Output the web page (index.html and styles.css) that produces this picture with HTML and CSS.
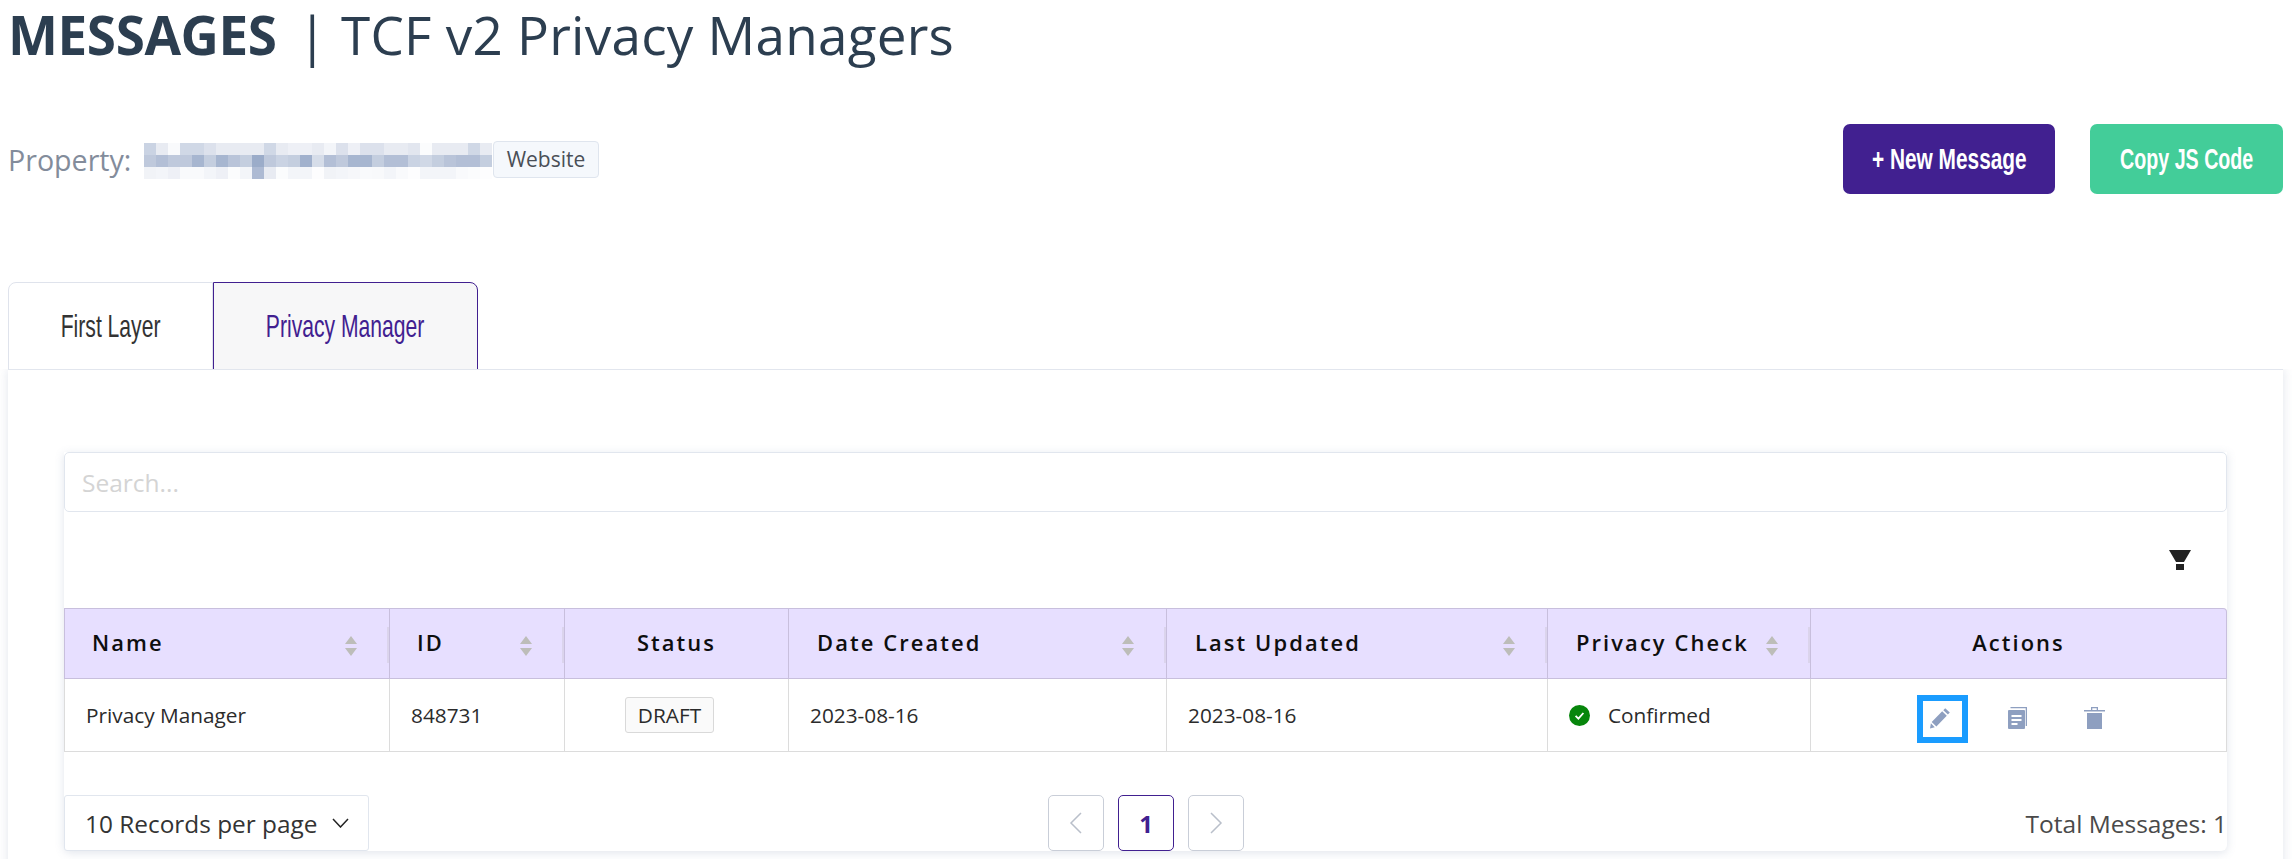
FILE: index.html
```html
<!DOCTYPE html>
<html lang="en">
<head>
<meta charset="utf-8">
<title>TCF v2 Privacy Managers</title>
<link rel="stylesheet" href="styles.css">
</head>
<body>
<header class="page-head">
  <h1 class="title"><strong>MESSAGES</strong><span class="title-sep">|</span>TCF v2 Privacy Managers</h1>
  <div class="toolbar">
    <div class="property">
      <span class="property-label">Property:</span>
      <svg class="mosaic" width="349" height="36" viewBox="0 0 29 3" shape-rendering="crispEdges" fill="#8a9dc0" aria-hidden="true">
        <g>
          <rect x="0" y="0" width="1" height="1" opacity=".45"/><rect x="1" y="0" width="1" height="1" opacity=".2"/><rect x="2" y="0" width="1" height="1" opacity=".05"/><rect x="3" y="0" width="1" height="1" opacity=".4"/><rect x="4" y="0" width="1" height="1" opacity=".4"/><rect x="5" y="0" width="1" height="1" opacity=".3"/><rect x="6" y="0" width="1" height="1" opacity=".2"/><rect x="7" y="0" width="1" height="1" opacity=".2"/><rect x="8" y="0" width="1" height="1" opacity=".2"/><rect x="9" y="0" width="1" height="1" opacity=".2"/><rect x="10" y="0" width="1" height="1" opacity=".4"/><rect x="11" y="0" width="1" height="1" opacity=".2"/><rect x="12" y="0" width="1" height="1" opacity=".15"/><rect x="13" y="0" width="1" height="1" opacity=".15"/><rect x="14" y="0" width="1" height="1" opacity=".2"/><rect x="15" y="0" width="1" height="1" opacity=".1"/><rect x="16" y="0" width="1" height="1" opacity=".3"/><rect x="17" y="0" width="1" height="1" opacity=".15"/><rect x="18" y="0" width="1" height="1" opacity=".3"/><rect x="19" y="0" width="1" height="1" opacity=".3"/><rect x="20" y="0" width="1" height="1" opacity=".2"/><rect x="21" y="0" width="1" height="1" opacity=".2"/><rect x="22" y="0" width="1" height="1" opacity=".25"/><rect x="23" y="0" width="1" height="1" opacity=".03"/><rect x="24" y="0" width="1" height="1" opacity=".2"/><rect x="25" y="0" width="1" height="1" opacity=".2"/><rect x="26" y="0" width="1" height="1" opacity=".2"/><rect x="27" y="0" width="1" height="1" opacity=".4"/><rect x="28" y="0" width="1" height="1" opacity=".2"/>
        </g>
        <g>
          <rect x="0" y="1" width="1" height="1" opacity=".55"/><rect x="1" y="1" width="1" height="1" opacity=".65"/><rect x="2" y="1" width="1" height="1" opacity=".55"/><rect x="3" y="1" width="1" height="1" opacity=".55"/><rect x="4" y="1" width="1" height="1" opacity=".75"/><rect x="5" y="1" width="1" height="1" opacity=".5"/><rect x="6" y="1" width="1" height="1" opacity=".75"/><rect x="7" y="1" width="1" height="1" opacity=".6"/><rect x="8" y="1" width="1" height="1" opacity=".5"/><rect x="9" y="1" width="1" height="1" opacity=".85"/><rect x="10" y="1" width="1" height="1" opacity=".55"/><rect x="11" y="1" width="1" height="1" opacity=".45"/><rect x="12" y="1" width="1" height="1" opacity=".5"/><rect x="13" y="1" width="1" height="1" opacity=".8"/><rect x="14" y="1" width="1" height="1" opacity=".35"/><rect x="15" y="1" width="1" height="1" opacity=".65"/><rect x="16" y="1" width="1" height="1" opacity=".55"/><rect x="17" y="1" width="1" height="1" opacity=".75"/><rect x="18" y="1" width="1" height="1" opacity=".75"/><rect x="19" y="1" width="1" height="1" opacity=".5"/><rect x="20" y="1" width="1" height="1" opacity=".65"/><rect x="21" y="1" width="1" height="1" opacity=".65"/><rect x="22" y="1" width="1" height="1" opacity=".45"/><rect x="23" y="1" width="1" height="1" opacity=".4"/><rect x="24" y="1" width="1" height="1" opacity=".5"/><rect x="25" y="1" width="1" height="1" opacity=".6"/><rect x="26" y="1" width="1" height="1" opacity=".65"/><rect x="27" y="1" width="1" height="1" opacity=".65"/><rect x="28" y="1" width="1" height="1" opacity=".5"/>
        </g>
        <g>
          <rect x="0" y="2" width="1" height="1" opacity=".12"/><rect x="1" y="2" width="1" height="1" opacity=".1"/><rect x="2" y="2" width="1" height="1" opacity=".15"/><rect x="3" y="2" width="1" height="1" opacity=".05"/><rect x="4" y="2" width="1" height="1" opacity=".05"/><rect x="5" y="2" width="1" height="1" opacity=".1"/><rect x="6" y="2" width="1" height="1" opacity=".15"/><rect x="7" y="2" width="1" height="1" opacity=".03"/><rect x="8" y="2" width="1" height="1" opacity=".1"/><rect x="9" y="2" width="1" height="1" opacity=".7"/><rect x="10" y="2" width="1" height="1" opacity=".2"/><rect x="11" y="2" width="1" height="1" opacity=".03"/><rect x="12" y="2" width="1" height="1" opacity=".1"/><rect x="13" y="2" width="1" height="1" opacity=".1"/><rect x="14" y="2" width="1" height="1" opacity=".02"/><rect x="15" y="2" width="1" height="1" opacity=".12"/><rect x="16" y="2" width="1" height="1" opacity=".1"/><rect x="17" y="2" width="1" height="1" opacity=".08"/><rect x="18" y="2" width="1" height="1" opacity=".05"/><rect x="19" y="2" width="1" height="1" opacity=".06"/><rect x="20" y="2" width="1" height="1" opacity=".1"/><rect x="21" y="2" width="1" height="1" opacity=".05"/><rect x="22" y="2" width="1" height="1" opacity=".02"/><rect x="23" y="2" width="1" height="1" opacity=".1"/><rect x="24" y="2" width="1" height="1" opacity=".1"/><rect x="25" y="2" width="1" height="1" opacity=".1"/><rect x="26" y="2" width="1" height="1" opacity=".05"/><rect x="27" y="2" width="1" height="1" opacity=".03"/><rect x="28" y="2" width="1" height="1" opacity=".02"/>
        </g>
      </svg>
      <span class="badge">Website</span>
    </div>
    <div class="toolbar-actions">
      <button class="btn btn-primary" type="button"><span class="condensed">+ New Message</span></button>
      <button class="btn btn-secondary" type="button"><span class="condensed">Copy JS Code</span></button>
    </div>
  </div>
</header>

<nav class="tabs">
  <a class="tab"><span class="condensed-light">First Layer</span></a>
  <a class="tab tab-active"><span class="condensed-light">Privacy Manager</span></a>
</nav>

<main class="outer-card">
  <section class="inner-card">
    <input class="search" type="text" placeholder="Search...">
    <div class="filter-row">
      <svg class="filter-icon" width="22" height="20" viewBox="0 0 22 20" aria-hidden="true"><path d="M0 0h22l-7 12H7z" fill="#222"/><rect x="7" y="14" width="8" height="6" fill="#222"/></svg>
    </div>
    <table class="grid">
      <colgroup>
        <col class="col-name"><col class="col-id"><col class="col-status"><col class="col-created"><col class="col-updated"><col class="col-check"><col class="col-actions">
      </colgroup>
      <thead>
        <tr>
          <th class="sortable th-name"><span>Name</span><i class="sorter"></i></th>
          <th class="sortable th-id"><span>ID</span><i class="sorter"></i></th>
          <th class="centered">Status</th>
          <th class="sortable th-date"><span>Date Created</span><i class="sorter"></i></th>
          <th class="sortable th-date"><span>Last Updated</span><i class="sorter"></i></th>
          <th class="sortable th-check"><span>Privacy Check</span><i class="sorter"></i></th>
          <th class="centered">Actions</th>
        </tr>
      </thead>
      <tbody>
        <tr>
          <td>Privacy Manager</td>
          <td>848731</td>
          <td class="centered"><span class="tag">DRAFT</span></td>
          <td>2023-08-16</td>
          <td>2023-08-16</td>
          <td>
            <span class="confirmed">
              <svg width="21" height="21" viewBox="0 0 21 21" aria-hidden="true"><circle cx="10.5" cy="10.5" r="10.5" fill="#07860c"/><path d="M6.6 10.8l2.8 2.8 5-5.6" fill="none" stroke="#fff" stroke-width="1.8"/></svg>
              Confirmed
            </span>
          </td>
          <td>
            <div class="actions">
              <span class="action action-focus">
                <svg width="21" height="22" viewBox="0 0 21 22" aria-hidden="true"><path d="M15.2 1.2l4.6 4.4-1.9 2-4.6-4.4zM12.2 4.3l4.6 4.4L6.4 19.4l-4.7-4.5zM.9 16.3l3.9 3.9-4.8 1.4z" fill="#8e9fc0"/></svg>
              </span>
              <span class="action">
                <svg width="21" height="22" viewBox="0 0 21 22" aria-hidden="true"><path d="M3.5 0H20v19h-1.3V1.3H3.5z" fill="#8e9fc0"/><path d="M2 3h15a1 1 0 0 1 1 1v17a1 1 0 0 1-1 1H2a1 1 0 0 1-1-1V4a1 1 0 0 1 1-1z" fill="#8e9fc0"/><path d="M4.5 8h10v2h-10zM4.5 12h10v2h-10zM4.5 16h6v2h-6z" fill="#fff"/></svg>
              </span>
              <span class="action">
                <svg width="21" height="22" viewBox="0 0 21 22" aria-hidden="true"><path d="M7 0h7v3h7v1.4H0V3h7zm1.3 1.3V3h4.4V1.3z" fill="#8e9fc0"/><path d="M3 6h15v16H3z" fill="#8e9fc0"/></svg>
              </span>
            </div>
          </td>
        </tr>
      </tbody>
    </table>
    <footer class="table-foot">
      <div class="per-page">10 Records per page
        <svg width="17" height="10" viewBox="0 0 17 10" aria-hidden="true"><path d="M1 1l7.5 8L16 1" fill="none" stroke="#222" stroke-width="1.5"/></svg>
      </div>
      <div class="pager">
        <span class="page page-off"><svg width="14" height="24" viewBox="0 0 14 24" aria-hidden="true"><path d="M12 2L2 12l10 10" fill="none" stroke="#b9bfca" stroke-width="1.5"/></svg></span>
        <span class="page page-current">1</span>
        <span class="page page-off"><svg width="14" height="24" viewBox="0 0 14 24" aria-hidden="true"><path d="M2 2l10 10L2 22" fill="none" stroke="#b9bfca" stroke-width="1.5"/></svg></span>
      </div>
      <div class="total">Total Messages: 1</div>
    </footer>
  </section>
</main>
</body>
</html>
```

FILE: styles.css
```css
* { box-sizing: border-box; }

html, body { margin: 0; height: 859px; overflow: hidden; background: #fff; }

body {
  font-family: "Open Sans", "Noto Sans", sans-serif;
  color: #2b2b2b;
}

.page-head { padding: 0 9px 0 8px; }

.title {
  margin: 0;
  height: 70px;
  font-size: 53px;
  line-height: 70px;
  font-weight: 500;
  letter-spacing: .25px;
  color: #2c3e50;
  white-space: nowrap;
}

.title strong { font-weight: 700; letter-spacing: -.4px; }
.title-sep { margin: 0 14px 0 21px; font-weight: 400; }

.toolbar {
  display: flex;
  justify-content: space-between;
  align-items: center;
  margin-top: 54px;
  height: 70px;
}

.property { display: flex; align-items: center; }
.property-label { font-size: 28.6px; color: #838c9b; width: 135px; }
.mosaic { display: block; margin-top: 3px; }

.badge {
  height: 37px;
  width: 106px;
  margin-left: 1px;
  border: 1px solid #dfe5ee;
  border-radius: 4px;
  background: #f5f8fc;
  color: #4a4f57;
  font-size: 21px;
  font-weight: 500;
  line-height: 35px;
  text-align: center;
}

.toolbar-actions { display: flex; gap: 35px; }

.btn {
  display: flex;
  align-items: center;
  justify-content: center;
  height: 70px;
  border: 0;
  border-radius: 7px;
  color: #fff;
  font: inherit;
  padding: 0;
}

.btn-primary { width: 212px; background: #412090; }
.btn-secondary { width: 193px; background: #43cd99; }

.condensed, .condensed-light {
  display: inline-block;
  flex: none;
  white-space: nowrap;
  font-family: "Liberation Sans", sans-serif;
}

.condensed { font-size: 30px; font-weight: 700; }
.btn-primary .condensed { transform: scaleX(.695); }
.btn-secondary .condensed { transform: scaleX(.655); }
.condensed-light { font-size: 32px; font-weight: 400; transform: scaleX(.66); }

.tabs {
  display: flex;
  margin: 88px 0 0 8px;
  height: 87px;
}

.tab {
  display: flex;
  align-items: center;
  justify-content: center;
  height: 88px;
  color: #333;
  border: 1px solid #dfe3ec;
  border-radius: 8px 0 0 0;
  width: 205px;
  position: relative;
}

.tab-active {
  width: 265px;
  color: #412090;
  background: #f7f7f8;
  border-color: #412090;
  border-radius: 0 8px 0 0;
}

.outer-card {
  margin: 0 9px 0 8px;
  height: 520px;
  padding: 82px 56px 0 56px;
  border-top: 1px solid #e2e6ee;
  background: #fff;
  box-shadow: 0 0 10px rgba(90, 110, 150, .18);
  clip-path: inset(0 -12px 0 -12px);
}

.inner-card {
  height: 399px;
  background: #fff;
  border-radius: 0 0 6px 6px;
  box-shadow: 0 2px 10px rgba(90, 110, 150, .18);
}

.search {
  display: block;
  width: 100%;
  height: 60px;
  padding: 0 17px;
  border: 1px solid #e1e6ee;
  border-radius: 5px;
  outline: 0;
  background: #fff;
  font: inherit;
  font-size: 24.5px;
}

.search::placeholder { color: #d4d4d4; opacity: 1; }

.filter-row {
  height: 96px;
  display: flex;
  justify-content: flex-end;
  padding: 38px 36px 0 0;
}

.filter-icon { display: block; }

.grid {
  width: 100%;
  table-layout: fixed;
  border-collapse: separate;
  border-spacing: 0;
  font-size: 20.8px;
}

.col-name { width: 326px; }
.col-id { width: 175px; }
.col-status { width: 224px; }
.col-created { width: 378px; }
.col-updated { width: 381px; }
.col-check { width: 263px; }

.grid th {
  height: 71px;
  background: #e7dfff;
  border-top: 1px solid #c8bfdd;
  border-bottom: 1px solid #c8bfdd;
  border-right: 1px solid #c8bfdd;
  font-size: 21.9px;
  font-weight: 600;
  letter-spacing: 2.1px;
  color: #0e0e0e;
  text-align: left;
  padding: 0 0 2px;
}

.grid th:first-child { border-left: 1px solid #c8bfdd; }
.grid th:last-child { border-top-right-radius: 4px; }

.grid td {
  height: 73px;
  border-bottom: 1px solid #dcdcdc;
  border-right: 1px solid #dcdcdc;
  padding: 0 0 0 21px;
  color: #2b2b2b;
}

.grid td:first-child { border-left: 1px solid #dcdcdc; }

.grid th.centered { text-align: center; }
.grid td.centered { text-align: center; padding: 0; }

.sortable { position: relative; }
.grid th.th-name { padding-left: 27px; }
.grid th.th-id { padding-left: 27px; }
.grid th.th-date { padding-left: 28px; }
.grid th.th-check { padding-left: 28px; }

.sorter {
  position: absolute;
  right: 31px;
  top: 27px;
  width: 14px;
  height: 20px;
}

.sorter::before, .sorter::after {
  content: "";
  position: absolute;
  left: 1px;
  border-left: 6px solid transparent;
  border-right: 6px solid transparent;
}

.sorter::before { top: 0; border-bottom: 8px solid #bdbdb9; }
.sorter::after { bottom: 0; border-top: 8px solid #bdbdb9; }

.sortable::after {
  content: "";
  position: absolute;
  right: 0;
  top: 18px;
  width: 2px;
  height: 36px;
  background: #dbd4ec;
}

.tag {
  display: inline-block;
  height: 36px;
  margin-right: 14px;
  padding: 0 12px;
  border: 1px solid #d9d9d9;
  border-radius: 3px;
  background: #fafafa;
  font-size: 20.8px;
  line-height: 34px;
}

.confirmed { display: flex; align-items: center; gap: 18px; }

.actions {
  display: flex;
  justify-content: center;
  gap: 56px;
  margin-left: -23px;
  padding-top: 5px;
}

.action { display: block; width: 21px; height: 22px; position: relative; }
.action svg { display: block; }

.action-focus::before {
  content: "";
  box-sizing: border-box;
  position: absolute;
  left: -13px;
  top: -12px;
  width: 51px;
  height: 48px;
  border: 6px solid #1a9cff;
}

.table-foot {
  display: flex;
  justify-content: space-between;
  align-items: center;
  position: relative;
  margin-top: 43px;
  height: 56px;
}

.per-page {
  display: flex;
  align-items: center;
  gap: 14px;
  height: 56px;
  width: 305px;
  padding-left: 20px;
  border: 1px solid #e1e6ee;
  border-radius: 3px;
  font-size: 24.4px;
  color: #333;
  background: #fff;
}

.pager {
  display: flex;
  gap: 14px;
  position: absolute;
  left: 984px;
  top: 0;
}

.page {
  display: flex;
  align-items: center;
  justify-content: center;
  width: 56px;
  height: 56px;
  border: 1px solid #c9ced8;
  border-radius: 5px;
  background: #fff;
}

.page-current {
  border-color: #412090;
  color: #412090;
  font-size: 24px;
  font-weight: 700;
}

.total {
  font-size: 24.5px;
  color: #4a4a4a;
}
```
